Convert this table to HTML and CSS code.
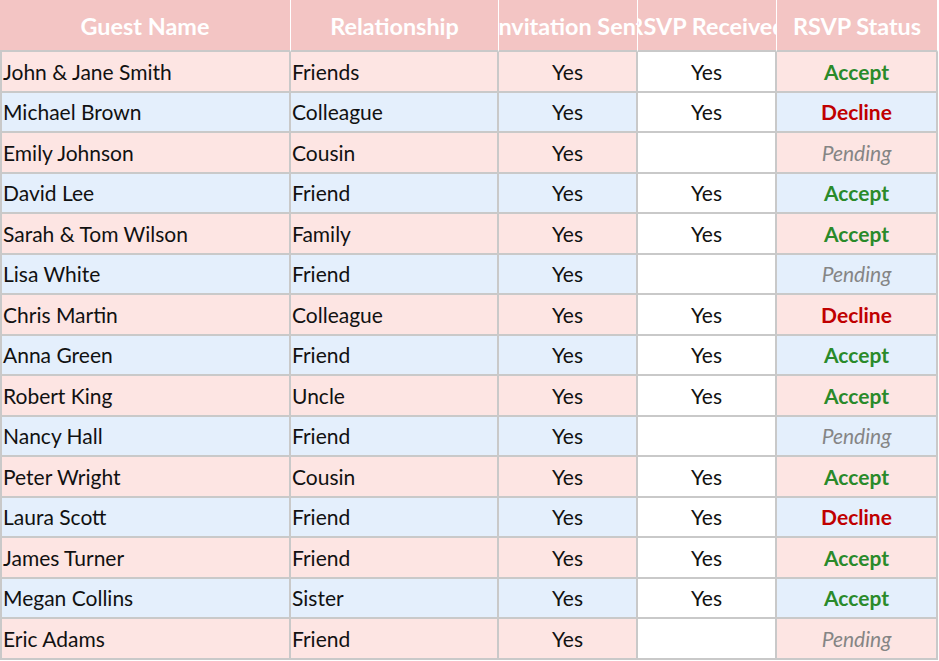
FILE: index.html
```html
<!DOCTYPE html>
<html>
<head>
<meta charset="utf-8">
<link rel="stylesheet" href="styles.css">
</head>
<body>
<div class="sheet">
  <div class="hd">Guest Name</div><div class="hd">Relationship</div><div class="hd">Invitation Sent</div><div class="hd">RSVP Received</div><div class="hd">RSVP Status</div>

  <div class="c pink">John &amp; Jane Smith</div><div class="c pink">Friends</div><div class="c pink ctr">Yes</div><div class="c white ctr">Yes</div><div class="c pink ctr accept">Accept</div>
  <div class="c blue">Michael Brown</div><div class="c blue">Colleague</div><div class="c blue ctr">Yes</div><div class="c white ctr">Yes</div><div class="c blue ctr decline">Decline</div>
  <div class="c pink">Emily Johnson</div><div class="c pink">Cousin</div><div class="c pink ctr">Yes</div><div class="c white ctr"></div><div class="c pink ctr pending">Pending</div>
  <div class="c blue">David Lee</div><div class="c blue">Friend</div><div class="c blue ctr">Yes</div><div class="c white ctr">Yes</div><div class="c blue ctr accept">Accept</div>
  <div class="c pink">Sarah &amp; Tom Wilson</div><div class="c pink">Family</div><div class="c pink ctr">Yes</div><div class="c white ctr">Yes</div><div class="c pink ctr accept">Accept</div>
  <div class="c blue">Lisa White</div><div class="c blue">Friend</div><div class="c blue ctr">Yes</div><div class="c white ctr"></div><div class="c blue ctr pending">Pending</div>
  <div class="c pink">Chris Martin</div><div class="c pink">Colleague</div><div class="c pink ctr">Yes</div><div class="c white ctr">Yes</div><div class="c pink ctr decline">Decline</div>
  <div class="c blue">Anna Green</div><div class="c blue">Friend</div><div class="c blue ctr">Yes</div><div class="c white ctr">Yes</div><div class="c blue ctr accept">Accept</div>
  <div class="c pink">Robert King</div><div class="c pink">Uncle</div><div class="c pink ctr">Yes</div><div class="c white ctr">Yes</div><div class="c pink ctr accept">Accept</div>
  <div class="c blue">Nancy Hall</div><div class="c blue">Friend</div><div class="c blue ctr">Yes</div><div class="c white ctr"></div><div class="c blue ctr pending">Pending</div>
  <div class="c pink">Peter Wright</div><div class="c pink">Cousin</div><div class="c pink ctr">Yes</div><div class="c white ctr">Yes</div><div class="c pink ctr accept">Accept</div>
  <div class="c blue">Laura Scott</div><div class="c blue">Friend</div><div class="c blue ctr">Yes</div><div class="c white ctr">Yes</div><div class="c blue ctr decline">Decline</div>
  <div class="c pink">James Turner</div><div class="c pink">Friend</div><div class="c pink ctr">Yes</div><div class="c white ctr">Yes</div><div class="c pink ctr accept">Accept</div>
  <div class="c blue">Megan Collins</div><div class="c blue">Sister</div><div class="c blue ctr">Yes</div><div class="c white ctr">Yes</div><div class="c blue ctr accept">Accept</div>
  <div class="c pink">Eric Adams</div><div class="c pink">Friend</div><div class="c pink ctr">Yes</div><div class="c white ctr"></div><div class="c pink ctr pending">Pending</div>
</div>
</body>
</html>
```

FILE: styles.css
```css
html, body {
  margin: 0;
  padding: 0;
  background: #ffffff;
}

.sheet {
  display: grid;
  grid-template-columns: 291px 208px 139px 139px 161px;
  grid-template-rows: 52px;
  grid-auto-rows: 40.5px;
  width: 938px;
  font-family: Lato, "Liberation Sans", sans-serif;
  font-size: 21px;
  color: #111111;
}

.hd {
  background: #f3c5c4;
  color: #ffffff;
  font-weight: bold;
  font-size: 23.4px;
  display: flex;
  align-items: center;
  justify-content: center;
  white-space: nowrap;
  overflow: hidden;
  border-right: 1px solid #ffffff;
  border-bottom: 2px solid #c9c9c9;
  box-sizing: border-box;
  padding-top: 1px;
}

.hd:last-of-type {
  border-right: 1px solid #f3c5c4;
}

.c {
  display: flex;
  align-items: center;
  white-space: nowrap;
  overflow: hidden;
  box-sizing: border-box;
  border-right: 2px solid #c9c9c9;
  border-bottom: 2px solid #c9c9c9;
  padding-left: 1px;
}

.c:nth-child(5n+1) {
  border-left: 2px solid #c9c9c9;
  padding-left: 1px;
}

.ctr {
  justify-content: center;
  padding-left: 0;
}

.pink { background: #fde5e3; }
.blue { background: #e4effc; }
.white { background: #ffffff; }

.accept { color: #2a8a2a; font-weight: bold; }
.decline { color: #c00000; font-weight: bold; }
.pending { color: #858585; font-style: italic; }
```
